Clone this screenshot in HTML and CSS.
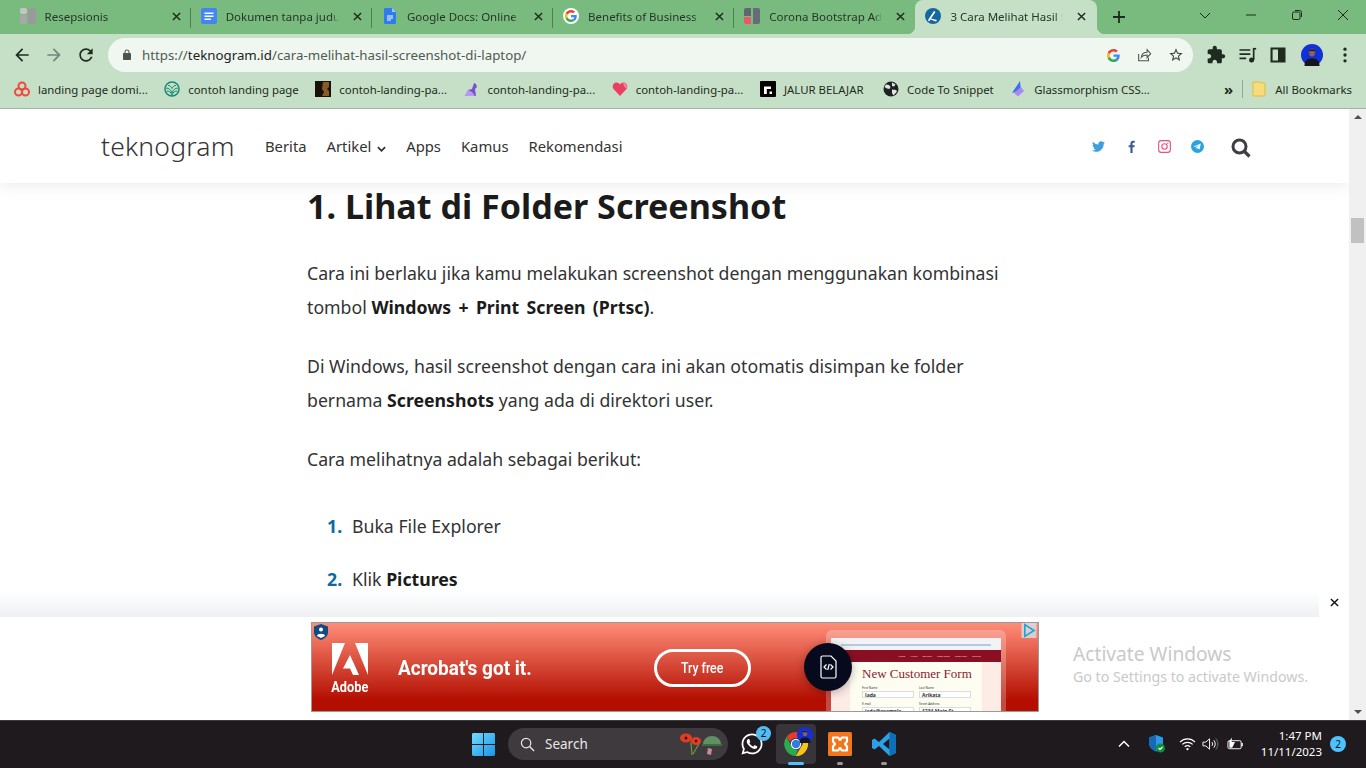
FILE: index.html
```html
<!DOCTYPE html>
<html lang="en">
<head>
    <meta charset="UTF-8">
    <title>3 Cara Melihat Hasil Screenshot di Laptop</title>
    <link rel="stylesheet" href="styles.css">
</head>
<body>

<svg class="sprites" width="0" height="0">
    <symbol id="g-logo" viewBox="0 0 48 48">
        <path fill="#EA4335" d="M24 9.5c3.54 0 6.71 1.22 9.21 3.6l6.85-6.85C35.9 2.38 30.47 0 24 0 14.62 0 6.51 5.38 2.56 13.22l7.98 6.19C12.43 13.72 17.74 9.5 24 9.5z"/>
        <path fill="#4285F4" d="M46.98 24.55c0-1.57-.15-3.09-.38-4.55H24v9.02h12.94c-.58 2.96-2.26 5.48-4.78 7.18l7.73 6c4.51-4.18 7.09-10.36 7.09-17.65z"/>
        <path fill="#FBBC05" d="M10.53 28.59c-.48-1.45-.76-2.99-.76-4.59s.27-3.14.76-4.59l-7.98-6.19C.92 16.46 0 20.12 0 24c0 3.88.92 7.54 2.56 10.78l7.97-6.19z"/>
        <path fill="#34A853" d="M24 48c6.48 0 11.93-2.13 15.89-5.81l-7.73-6c-2.15 1.45-4.92 2.3-8.16 2.3-6.26 0-11.57-4.22-13.47-9.91l-7.98 6.19C6.51 42.62 14.62 48 24 48z"/>
    </symbol>
    <symbol id="x-mark" viewBox="0 0 10 10">
        <path d="M1 1l8 8M9 1l-8 8" stroke="currentColor" stroke-width="1.6" fill="none"/>
    </symbol>
    <symbol id="avatar" viewBox="0 0 22 22">
        <circle cx="11" cy="11" r="11" fill="#1230d8"/>
        <path d="M3.5 22c0-5 2-7.500 7.500-7.500s7.500 2.500 7.500 7.500z" fill="#14161c"/>
        <ellipse cx="11" cy="8.500" rx="3" ry="4" fill="#8a6450"/>
        <path d="M8 7.500c0-3 6-3 6 0-2-1-4-1-6 0z" fill="#15131a"/>
    </symbol>
</svg>

<div class="tabstrip">
    <div class="tab">
        <svg class="favicon" viewBox="0 0 16 16"><rect x="0" y="0" width="7" height="6" rx="2" fill="#c4c4c4"/><rect x="0" y="7" width="7" height="9" rx="2" fill="#a8a8a8"/><rect x="8" y="0" width="8" height="16" rx="2" fill="#9a9a9a"/></svg>
        <span class="tab-title">Resepsionis</span>
        <svg class="tab-close"><use href="#x-mark"/></svg>
    </div>
    <div class="tab">
        <svg class="favicon" viewBox="0 0 16 16"><rect width="16" height="16" rx="2" fill="#4285f4"/><path d="M3.500 4.500h9v1.500h-9zM3.500 7.500h9V9h-9zM3.500 10.500h6.500V12H3.500z" fill="#fff"/></svg>
        <span class="tab-title">Dokumen tanpa judul</span>
        <svg class="tab-close"><use href="#x-mark"/></svg>
    </div>
    <div class="tab">
        <svg class="favicon" viewBox="0 0 16 16"><path d="M3 0h7l4 4v10.500a1.500 1.500 0 0 1-1.500 1.500h-9.500A1.500 1.500 0 0 1 2 14.500V1.500A1.500 1.500 0 0 1 3 0z" fill="#2f7cf0"/><path d="M10 0l4 4h-4z" fill="#a5c6fa"/><path d="M5 7.500h6v1H5zM5 9.500h6v1H5zM5 11.500h4v1H5z" fill="#fff"/></svg>
        <span class="tab-title">Google Docs: Online Document</span>
        <svg class="tab-close"><use href="#x-mark"/></svg>
    </div>
    <div class="tab">
        <svg class="favicon" viewBox="0 0 16 16"><circle cx="8" cy="8" r="8" fill="#fff"/><use href="#g-logo" x="2" y="2" width="12" height="12"/></svg>
        <span class="tab-title">Benefits of Business Analysis</span>
        <svg class="tab-close"><use href="#x-mark"/></svg>
    </div>
    <div class="tab">
        <svg class="favicon" viewBox="0 0 16 16"><path d="M2 0h5v8H0V2a2 2 0 0 1 2-2z" fill="#5f6670"/><path d="M0 9h7v7H2a2 2 0 0 1-2-2z" fill="#f0566a"/><path d="M9 0h5a2 2 0 0 1 2 2v12a2 2 0 0 1-2 2H9z" fill="#666d78"/></svg>
        <span class="tab-title">Corona Bootstrap Admin</span>
        <svg class="tab-close"><use href="#x-mark"/></svg>
    </div>
    <div class="tab tab-active">
        <svg class="favicon" viewBox="0 0 16 16"><circle cx="8" cy="8" r="8" fill="#14689f"/><path d="M3 12L9 3l1.500 1L6 10.500l6 1.500-1 1.500-5.500-2L4 13.500z" fill="#fff"/></svg>
        <span class="tab-title">3 Cara Melihat Hasil Screenshot</span>
        <svg class="tab-close"><use href="#x-mark"/></svg>
    </div>
    <svg class="new-tab" viewBox="0 0 14 14"><path d="M7 1v12M1 7h12" stroke="#1d2a1f" stroke-width="1.800"/></svg>
    <div class="window-controls">
        <svg class="win-btn" viewBox="0 0 12 12"><path d="M1 4l5 5 5-5" stroke="#1d2a1f" fill="none"/></svg>
        <svg class="win-btn" viewBox="0 0 12 12"><path d="M1 6h10" stroke="#1d2a1f"/></svg>
        <svg class="win-btn" viewBox="0 0 12 12"><rect x="1.500" y="3" width="7.500" height="7.500" rx="1.500" stroke="#1d2a1f" fill="none"/><path d="M4 1.500h4.500a2 2 0 0 1 2 2V8" stroke="#1d2a1f" fill="none"/></svg>
        <svg class="win-btn" viewBox="0 0 12 12"><path d="M1 1l10 10M11 1L1 11" stroke="#1d2a1f" fill="none"/></svg>
    </div>
</div>

<div class="toolbar">
    <svg class="tool-icon" viewBox="0 0 24 24"><path fill="#1f2a21" d="M20 11H7.830l5.590-5.590L12 4l-8 8 8 8 1.410-1.410L7.830 13H20v-2z"/></svg>
    <svg class="tool-icon" viewBox="0 0 24 24"><path fill="#72857a" d="M4 11h12.170l-5.590-5.590L12 4l8 8-8 8-1.410-1.410L16.170 13H4v-2z"/></svg>
    <svg class="tool-icon" viewBox="0 0 24 24"><path fill="#1f2a21" d="M17.650 6.350C16.200 4.900 14.210 4 12 4c-4.420 0-7.990 3.580-7.990 8s3.570 8 7.990 8c3.730 0 6.840-2.550 7.730-6h-2.080c-.82 2.330-3.040 4-5.650 4-3.310 0-6-2.690-6-6s2.690-6 6-6c1.660 0 3.140.69 4.220 1.780L13 11h7V4l-2.350 2.350z"/></svg>
    <div class="omnibox">
        <svg class="lock" viewBox="0 0 24 24"><path fill="#4a534c" d="M18 8h-1V6c0-2.760-2.240-5-5-5S7 3.240 7 6v2H6c-1.100 0-2 .9-2 2v10c0 1.100.9 2 2 2h12c1.100 0 2-.9 2-2V10c0-1.100-.9-2-2-2zM9 8V6c0-1.660 1.340-3 3-3s3 1.340 3 3v2z"/></svg>
        <span class="url"><span class="url-dim">https://</span>teknogram.id<span class="url-dim">/cara-melihat-hasil-screenshot-di-laptop/</span></span>
        <svg class="omni-icon omni-g"><use href="#g-logo"/></svg>
        <svg class="omni-icon" viewBox="0 0 18 18"><path d="M3 8v7.500h11V12M6 11.500c.5-3.500 3-5.500 6.500-5.500V3l4 4.500-4 4.500V9c-3 0-5 .8-6.500 2.500z" fill="none" stroke="#4a534c" stroke-width="1.200"/></svg>
        <svg class="omni-icon" viewBox="0 0 24 24"><path fill="#3a433c" d="M22 9.240l-7.190-.62L12 2 9.190 8.630 2 9.240l5.460 4.730L5.820 21 12 17.270 18.180 21l-1.630-7.030L22 9.240zM12 15.400l-3.760 2.270 1-4.280-3.320-2.880 4.380-.38L12 6.100l1.710 4.040 4.380.38-3.320 2.880 1 4.280L12 15.400z"/></svg>
    </div>
    <div class="toolbar-right">
        <svg class="tool-icon" viewBox="0 0 24 24"><path fill="#1f2a21" d="M20.500 11H19V7c0-1.100-.9-2-2-2h-4V3.500C13 2.120 11.880 1 10.500 1S8 2.120 8 3.500V5H4c-1.100 0-1.990.9-1.990 2v3.800H3.500c1.490 0 2.700 1.210 2.700 2.700s-1.210 2.700-2.700 2.700H2V20c0 1.100.9 2 2 2h3.800v-1.500c0-1.490 1.210-2.700 2.700-2.700 1.490 0 2.700 1.210 2.700 2.700V22H17c1.100 0 2-.9 2-2v-4h1.500c1.380 0 2.500-1.120 2.500-2.500S21.880 11 20.500 11z"/></svg>
        <svg class="tool-icon" viewBox="0 0 24 24"><path d="M3 6h13M3 11h13M3 16h8" stroke="#1f2a21" stroke-width="2"/><path d="M20 5v13" stroke="#1f2a21" stroke-width="2"/><path d="M19 4.500h4" stroke="#1f2a21" stroke-width="2"/><circle cx="17.500" cy="18" r="3" fill="#1f2a21"/></svg>
        <svg class="tool-icon" viewBox="0 0 24 24"><path fill="#1f2a21" d="M3 3h18v18H3zm2.500 2.500v13H12v-13z"/></svg>
        <svg class="profile"><use href="#avatar"/></svg>
        <svg class="tool-icon" viewBox="0 0 24 24"><circle cx="12" cy="5" r="2" fill="#1f2a21"/><circle cx="12" cy="12" r="2" fill="#1f2a21"/><circle cx="12" cy="19" r="2" fill="#1f2a21"/></svg>
    </div>
</div>

<div class="bookmarks">
    <div class="bookmark">
        <svg class="favicon" viewBox="0 0 16 16"><g fill="none" stroke="#f0493e" stroke-width="2"><circle cx="8" cy="5" r="3.500"/><circle cx="4.500" cy="11" r="3.500"/><circle cx="11.500" cy="11" r="3.500"/></g></svg>
        <span>landing page domi...</span>
    </div>
    <div class="bookmark">
        <svg class="favicon" viewBox="0 0 16 16"><circle cx="8" cy="8" r="7" fill="none" stroke="#128a78" stroke-width="1.500"/><path d="M2 7c3 0 5 2 6 5 1-3 3-5 6-5M3 10c2 0 4 1 5 4 1-3 3-4 5-4M4 4.500c2 0 3 1 4 3 1-2 2-3 4-3" fill="none" stroke="#128a78"/></svg>
        <span>contoh landing page</span>
    </div>
    <div class="bookmark">
        <svg class="favicon" viewBox="0 0 16 16"><rect width="16" height="16" fill="#17120c"/><path d="M8 1h6v5l-2 2 2 2v5H7l2-4-2-3z" fill="#8a5a2b"/></svg>
        <span>contoh-landing-pa...</span>
    </div>
    <div class="bookmark">
        <svg class="favicon" viewBox="0 0 16 16"><path d="M1 15l3-6 4-1 2-6 2 1 1 3-2 2 1 7z" fill="#7a4fd0"/><path d="M1 15l3-6 4 2 3 4z" fill="#b79af0"/></svg>
        <span>contoh-landing-pa...</span>
    </div>
    <div class="bookmark">
        <svg class="favicon" viewBox="0 0 16 16"><path d="M8 15L1.500 8C-.5 5 1.500 1.500 4.500 1.500c1.500 0 2.800.8 3.500 2 .7-1.200 2-2 3.500-2 3 0 5 3.500 3 6.500z" fill="#ea3f63"/><path d="M11 1.700c2.800-.2 4.800 3 3.200 6L12 5z" fill="#f48aa0"/></svg>
        <span>contoh-landing-pa...</span>
    </div>
    <div class="bookmark bookmark-wide">
        <svg class="favicon" viewBox="0 0 16 16"><rect width="16" height="16" rx="1" fill="#000"/><path d="M4 13V5.500h7V8H6.800v5z" fill="#fff"/><rect x="9.500" y="10.500" width="2.500" height="2.500" fill="#fff"/></svg>
        <span>JALUR BELAJAR</span>
    </div>
    <div class="bookmark">
        <svg class="favicon" viewBox="0 0 16 16"><circle cx="8" cy="8" r="7.500" fill="#202124"/><path d="M3 3.500l3 .5 1.500 2-1 2-2.500-.5L1.500 6zM9 1.500l3.500 2L11 5.500 9 5zM9 8.500l4 .5 1 1.500-3.500 4L9 12z" fill="#dfe8df"/></svg>
        <span>Code To Snippet</span>
    </div>
    <div class="bookmark">
        <svg class="favicon" viewBox="0 0 16 16"><path d="M10 0l1 9-9 3z" fill="#3f6df0"/><path d="M11 6l3 4-6 5.500L4 12z" fill="#a78bf5"/></svg>
        <span>Glassmorphism CSS...</span>
    </div>
    <div class="bookmarks-end">
        <span class="chevrons">»</span>
        <span class="bookmarks-sep"></span>
        <svg class="favicon" viewBox="0 0 16 16"><path d="M2 1h7l1 1h3a1 1 0 0 1 1 1v11a1 1 0 0 1-1 1H3a1 1 0 0 1-1-1z" fill="#f7dc7c" stroke="#e6b93a"/></svg>
        <span>All Bookmarks</span>
    </div>
</div>

<div class="page">
    <div class="viewport">
        <header class="site-header">
            <div class="site-logo">teknogram</div>
            <nav class="site-nav">
                <a>Berita</a>
                <a>Artikel <svg class="caret" viewBox="0 0 10 6"><path d="M1 1l4 4 4-4" fill="none" stroke="#333" stroke-width="2"/></svg></a>
                <a>Apps</a>
                <a>Kamus</a>
                <a>Rekomendasi</a>
            </nav>
            <div class="site-social">
                <svg class="social" viewBox="0 0 512 512"><path fill="#3f9fdc" d="M459.370 151.716c.325 4.548.325 9.097.325 13.645 0 138.720-105.583 298.558-298.558 298.558-59.452 0-114.680-17.219-161.137-47.106 8.447.974 16.568 1.299 25.340 1.299 49.055 0 94.213-16.568 130.274-44.832-46.132-.975-84.792-31.188-98.112-72.772 6.498.974 12.995 1.624 19.818 1.624 9.421 0 18.843-1.300 27.614-3.573-48.081-9.747-84.143-51.980-84.143-102.985v-1.299c13.969 7.797 30.214 12.670 47.431 13.319-28.264-18.843-46.781-51.005-46.781-87.391 0-19.492 5.197-37.360 14.294-52.954 51.655 63.675 129.300 105.258 216.365 109.807-1.624-7.797-2.599-15.918-2.599-24.040 0-57.828 46.782-104.934 104.934-104.934 30.213 0 57.502 12.670 76.670 33.137 23.715-4.548 46.456-13.320 66.599-25.340-7.798 24.366-24.366 44.833-46.132 57.827 21.117-2.273 41.584-8.122 60.426-16.243-14.292 20.791-32.161 39.308-52.628 54.253z"/></svg>
                <svg class="social" viewBox="0 0 12 12"><path fill="#3b5998" d="M7 12V6.800h1.700L9 4.800H7V3.600c0-.6.2-1 1-1h1V.8C8.800.8 8.200.7 7.500.7 6 .7 5 1.600 5 3.300v1.500H3.400v2H5V12z"/></svg>
                <svg class="social" viewBox="0 0 12 12"><rect x=".6" y=".6" width="10.800" height="10.800" rx="2.500" fill="none" stroke="#e4507f" stroke-width="1"/><circle cx="6" cy="6" r="2.500" fill="none" stroke="#e4507f" stroke-width="1"/><circle cx="9" cy="3" r=".6" fill="#e4507f"/></svg>
                <svg class="social" viewBox="0 0 12 12"><circle cx="6" cy="6" r="6" fill="#2ba3e0"/><path d="M2.500 5.900L9 3.300 8 8.800 6.200 7.500 5.200 8.400l-.2-1.600 3-2.700-3.800 2.300z" fill="#fff"/></svg>
                <svg class="site-search" viewBox="0 0 20 20"><circle cx="8.500" cy="8.500" r="6.500" fill="none" stroke="#3d3f45" stroke-width="3"/><path d="M13.500 13.500l5 5" stroke="#3d3f45" stroke-width="3.200"/></svg>
            </div>
        </header>

        <article class="post">
            <h2>1. Lihat di Folder Screenshot</h2>
            <p>Cara ini berlaku jika kamu melakukan screenshot dengan menggunakan kombinasi tombol <b class="spaced">Windows + Print Screen (Prtsc)</b>.</p>
            <p>Di Windows, hasil screenshot dengan cara ini akan otomatis disimpan ke folder bernama <b>Screenshots</b> yang ada di direktori user.</p>
            <p>Cara melihatnya adalah sebagai berikut:</p>
            <ol>
                <li>Buka File Explorer</li>
                <li>Klik <b>Pictures</b></li>
            </ol>
        </article>

        <div class="ad-bar">
            <div class="ad-fade"></div>
            <button class="ad-close"><svg><use href="#x-mark"/></svg></button>
            <div class="ad">
                <svg class="ad-shield" viewBox="0 0 14 16"><path d="M7 0l7 2.500V8c0 4-3 6.500-7 8-4-1.500-7-4-7-8V2.500z" fill="#0f4c81"/><circle cx="7" cy="5.500" r="2" fill="#fff"/><path d="M3 12c0-3 8-3 8 0l-4 2z" fill="#fff"/></svg>
                <svg class="ad-play" viewBox="0 0 18 18"><rect width="18" height="18" fill="#d8e6ee" opacity=".75"/><path d="M4 2l11 7L4 16z" fill="none" stroke="#19a7d8" stroke-width="2"/></svg>
                <div class="adobe">
                    <svg viewBox="0 0 36 40" preserveAspectRatio="none"><path d="M0 0h13L0 40zM23 0h13v40zM18 15l9 25h-6l-3-8h-7z" fill="#fff"/></svg>
                    <span>Adobe</span>
                </div>
                <div class="ad-headline">Acrobat's got it.</div>
                <div class="ad-button"><span>Try free</span></div>
                <div class="ad-mock">
                    <div class="mock-browser">
                        <div class="mock-chrome"><span class="mock-url"></span></div>
                        <div class="mock-menu"><span>Home</span><span>About</span><span>Services</span><span>Meet Team</span><span>Resources</span><span>Contact</span></div>
                        <div class="mock-body">
                            <div class="mock-form">
                                <div class="mock-title">New Customer Form</div>
                                <div class="mock-fields">
                                    <div class="mock-field"><label>First Name</label><div>Jada</div></div>
                                    <div class="mock-field"><label>Last Name</label><div>Arikata</div></div>
                                    <div class="mock-field"><label>E-mail</label><div>jada@example</div></div>
                                    <div class="mock-field"><label>Street Address</label><div>1234 Main St</div></div>
                                </div>
                            </div>
                        </div>
                    </div>
                </div>
                <div class="ad-badge">
                    <svg viewBox="0 0 20 24"><path d="M3 2.500A1.500 1.500 0 0 1 4.500 1H13l5 5v15.500a1.500 1.500 0 0 1-1.500 1.500h-12A1.500 1.500 0 0 1 3 21.500z" fill="none" stroke="#fff" stroke-width="1.200"/><path d="M8.500 9.500L6 12l2.500 2.500M12.500 9.500L15 12l-2.500 2.500M11.300 9l-1.600 6" fill="none" stroke="#fff" stroke-width="1.200"/></svg>
                </div>
            </div>
        </div>

        <div class="activate">
            <div class="activate-title">Activate Windows</div>
            <div class="activate-sub">Go to Settings to activate Windows.</div>
        </div>
    </div>
    <div class="scrollbar">
        <span class="arrow-up"></span>
        <span class="thumb"></span>
        <span class="arrow-down"></span>
    </div>
</div>

<div class="taskbar">
    <svg class="start" viewBox="0 0 24 24"><defs><linearGradient id="win" x1="0" y1="0" x2="1" y2="1"><stop offset="0" stop-color="#6fdcff"/><stop offset="1" stop-color="#1a94e6"/></linearGradient></defs><path fill="url(#win)" d="M0 1.500A1.500 1.500 0 0 1 1.500 0h10v11.500H0zM12.500 0h10A1.500 1.500 0 0 1 24 1.500v10H12.500zM0 12.500h11.500V24h-10A1.500 1.500 0 0 1 0 22.500zM12.500 12.500H24v10a1.500 1.500 0 0 1-1.500 1.500h-10z"/></svg>
    <div class="task-search">
        <svg class="search-glass" viewBox="0 0 16 16"><circle cx="6.500" cy="6.500" r="5" fill="none" stroke="#e6e6e6" stroke-width="1.300"/><path d="M10.200 10.200l4.800 4.800" stroke="#e6e6e6" stroke-width="1.500"/></svg>
        <span class="search-label">Search</span>
        <svg class="search-art" viewBox="0 0 44 26"><path d="M13 11l1 13M22 11l-7 12" stroke="#6c9a3a" stroke-width="1.200" fill="none"/><ellipse cx="8" cy="7" rx="6" ry="4.500" fill="#e23d22"/><ellipse cx="18" cy="10" rx="5" ry="4" fill="#e23d22"/><circle cx="8" cy="7" r="1.500" fill="#3a1410"/><circle cx="18" cy="10" r="1.300" fill="#3a1410"/><path d="M25 13a9 8 0 0 1 18 0z" fill="#5f8f62"/><path d="M24 13h20v2H24z" fill="#3f6a44"/><path d="M30 17l4 1-1 6-4-1z" fill="#c98aa0"/></svg>
    </div>
    <div class="task-app task-whatsapp">
        <svg class="task-icon" viewBox="0 0 448 512"><path fill="#fff" d="M380.900 97.100C339 55.100 283.200 32 223.900 32c-122.400 0-222 99.600-222 222 0 39.100 10.200 77.300 29.600 111L0 480l117.700-30.900c32.400 17.700 68.900 27 106.100 27h.1c122.300 0 224.100-99.600 224.100-222 0-59.300-25.200-115-67.100-157zm-157 341.600c-33.200 0-65.700-8.900-94-25.700l-6.700-4-69.800 18.300L72 359.200l-4.400-7c-18.500-29.400-28.200-63.300-28.200-98.200 0-101.700 82.800-184.500 184.600-184.500 49.300 0 95.600 19.200 130.400 54.100 34.800 34.900 56.200 81.200 56.100 130.500 0 101.800-84.900 184.600-186.600 184.600zm101.200-138.200c-5.500-2.800-32.800-16.200-37.900-18-5.100-1.900-8.800-2.800-12.500 2.800-3.700 5.600-14.300 18-17.600 21.800-3.200 3.700-6.500 4.200-12 1.400-32.600-16.300-54-29.100-75.500-66-5.700-9.800 5.700-9.100 16.300-30.300 1.800-3.700.9-6.900-.5-9.700-1.400-2.800-12.500-30.100-17.100-41.200-4.500-10.800-9.100-9.300-12.500-9.500-3.200-.2-6.900-.2-10.600-.2-3.700 0-9.700 1.400-14.800 6.900-5.100 5.600-19.400 19-19.400 46.300 0 27.300 19.900 53.700 22.600 57.400 2.800 3.700 39.100 59.700 94.800 83.800 35.200 15.200 49 16.500 66.600 13.900 10.700-1.600 32.800-13.400 37.400-26.400 4.600-13 4.600-24.100 3.200-26.400-1.300-2.500-5-3.900-10.500-6.600z"/></svg>
        <span class="app-badge">2</span>
    </div>
    <div class="task-app task-chrome">
        <svg class="task-icon" viewBox="0 0 24 24"><path d="M12 0a12 12 0 0 1 10.400 6H12a6 6 0 0 0-5.700 4.100L2.500 5A12 12 0 0 1 12 0z" fill="#e33b2e"/><path d="M22.400 6a12 12 0 0 1-10.700 18l5.200-9a6 6 0 0 0 0-9z" fill="#f5c518"/><path d="M11.700 24A12 12 0 0 1 2.500 5l4.900 8.800a6 6 0 0 0 6.500 4z" fill="#2da94f"/><circle cx="12" cy="12" r="5.200" fill="#fff"/><circle cx="12" cy="12" r="4.200" fill="#2f7de1"/></svg>
        <svg class="chrome-avatar"><use href="#avatar"/></svg>
        <span class="indicator indicator-on"></span>
    </div>
    <div class="task-app">
        <svg class="task-icon" viewBox="0 0 24 24"><rect width="24" height="24" rx="1.500" fill="#f2761d"/><path d="M5 5.500h5l2 2.500 2-2.500h5v4l-2 2.500 2 2.500v4h-5l-2-2.500-2 2.500H5v-4l2-2.500-2-2.500z" fill="none" stroke="#fff" stroke-width="2.200" stroke-linejoin="round"/></svg>
        <span class="indicator"></span>
    </div>
    <div class="task-app">
        <svg class="task-icon" viewBox="0 0 24 24"><path fill="#2aa0e6" d="M17.500 0L24 3v18l-6.500 3L7 14l-4.500 3.500L0 16V8l2.500-1.500L7 10zM17.500 6.500L11 12l6.500 5.500z"/><path fill="#0e6fb5" d="M17.500 0L24 3v18l-6.500 3z"/></svg>
        <span class="indicator"></span>
    </div>
    <div class="tray">
        <svg class="tray-chevron" viewBox="0 0 12 8"><path d="M1 6.500l5-5 5 5" fill="none" stroke="#fff" stroke-width="1.500"/></svg>
        <svg class="tray-shield" viewBox="0 0 16 18"><path d="M7 0l7 2.500V8c0 4-3 6.500-7 8.500-4-2-7-4.500-7-8.500V2.500z" fill="#2a9bea"/><path d="M7 0v16.500c-4-2-7-4.500-7-8.500V2.500z" fill="#1768b5"/><circle cx="11.500" cy="13" r="4.500" fill="#0f8f35"/><path d="M9.500 13l1.500 1.500 2.500-2.500" fill="none" stroke="#fff" stroke-width="1.200"/></svg>
        <svg class="tray-icon tray-wifi" viewBox="0 0 18 14"><path d="M1 5c4.500-4.500 11.500-4.500 16 0M3.500 7.500c3-3 8-3 11 0M6 10c1.700-1.500 4.300-1.500 6 0" fill="none" stroke="#fff" stroke-width="1.200"/><circle cx="9" cy="12.500" r="1.200" fill="#fff"/></svg>
        <svg class="tray-icon tray-volume" viewBox="0 0 18 14"><path d="M1 5v4h3l4 3.500v-11L4 5z" fill="none" stroke="#fff"/><path d="M10.500 5c1 1.200 1 2.800 0 4M12.500 3c2 2.200 2 5.800 0 8" fill="none" stroke="#fff"/><path d="M14.500 1c3 3.500 3 8.500 0 12" fill="none" stroke="#777"/></svg>
        <svg class="tray-icon tray-battery" viewBox="0 0 18 14"><rect x="1" y="3.500" width="14" height="8.500" rx="1.500" fill="none" stroke="#fff"/><path d="M16 6v3.500" stroke="#fff" stroke-width="1.500"/><path d="M2.500 5h6l-3 6H2.500zM5 0v5H2z" fill="#fff"/></svg>
        <div class="clock">
            <div>1:47 PM</div>
            <div>11/11/2023</div>
        </div>
        <span class="notif-badge">2</span>
    </div>
</div>

</body>
</html>
```

FILE: styles.css
```css
:root {
    --tab-strip: #79bb7e;
    --chrome-bg: #c5e0c6;
    --omni-bg: #f0f7f1;
    --chrome-text: #1f2a21;
    --ui-font: 'Noto Sans', sans-serif;
    --taskbar-bg: #1f1a1d;
}

* {
    box-sizing: border-box;
}

html, body {
    margin: 0;
    height: 768px;
    overflow: hidden;
}

body {
    width: 1366px;
    display: flex;
    flex-direction: column;
    font-family: var(--ui-font);
    color: var(--chrome-text);
    background: #fff;
}

.sprites {
    position: absolute;
}

.favicon {
    width: 16px;
    height: 16px;
    flex: none;
}

/* tab strip */
.tabstrip {
    height: 34px;
    background: var(--tab-strip);
    display: flex;
    align-items: stretch;
    padding-left: 9.500px;
    flex: none;
}

.tab {
    position: relative;
    width: 181.200px;
    height: 34px;
    padding: 0 10px 2px;
    display: flex;
    align-items: center;
    font-size: 11.500px;
    color: #26352a;
    flex: none;
}

.tab::after {
    content: "";
    position: absolute;
    right: 0;
    top: 8px;
    height: 20px;
    width: 1px;
    background: #4d7f52;
}

.tab:nth-child(5)::after {
    display: none;
}

.tab-active {
    background: var(--chrome-bg);
    border-radius: 8px 8px 0 0;
}

/* the flared feet of the active tab */
.tab-active::before,
.tab-active::after {
    content: "";
    position: absolute;
    top: auto;
    bottom: 0;
    width: 8px;
    height: 8px;
}

.tab-active::before {
    left: -8px;
    background: radial-gradient(circle at 0 0, transparent 8px, var(--chrome-bg) 8.500px);
}

.tab-active::after {
    right: -8px;
    background: radial-gradient(circle at 100% 0, transparent 8px, var(--chrome-bg) 8.500px);
}

.tab .favicon {
    margin-right: 9px;
}

.tab-title {
    width: 113px;
    white-space: nowrap;
    overflow: hidden;
    -webkit-mask-image: linear-gradient(to right, #000 93%, transparent 100%);
    mask-image: linear-gradient(to right, #000 93%, transparent 100%);
}

.tab-close {
    width: 9px;
    height: 9px;
    margin-left: 14px;
    color: #1d2a1f;
}

.new-tab {
    width: 14px;
    height: 14px;
    margin: 10px 0 0 15px;
}

.window-controls {
    margin-left: auto;
    display: flex;
    align-items: flex-start;
    gap: 34px;
    padding: 9px 17px 0 0;
}

.win-btn {
    width: 12px;
    height: 12px;
}

/* toolbar */
.toolbar {
    height: 42px;
    background: var(--chrome-bg);
    display: flex;
    align-items: center;
    padding-left: 12px;
    flex: none;
}

.tool-icon {
    width: 20px;
    height: 20px;
    flex: none;
    margin-right: 12px;
}

.omnibox {
    width: 1085px;
    height: 34px;
    border-radius: 17px;
    background: var(--omni-bg);
    display: flex;
    align-items: center;
    padding: 0 9px 0 13px;
}

.lock {
    width: 12px;
    height: 12px;
    margin-right: 9px;
}

.url {
    font-size: 13.300px;
    color: #1d241e;
    flex: 1;
}

.url-dim {
    color: #4f5a52;
}

.omni-icon {
    width: 16px;
    height: 16px;
    margin-left: 16px;
}

.omni-g {
    width: 13px;
    height: 13px;
}

.toolbar-right {
    display: flex;
    align-items: center;
    margin-left: 13px;
    gap: 3px;
}

.toolbar-right .tool-icon {
    margin-right: 8px;
}

.profile {
    width: 22px;
    height: 22px;
    margin: 0 9px 0 2px;
}

/* bookmarks */
.bookmarks {
    height: 33px;
    background: var(--chrome-bg);
    border-bottom: 1px solid #9fb5a1;
    display: flex;
    align-items: center;
    padding: 0 0 6px 14px;
    font-size: 11.400px;
    flex: none;
}

.bookmark {
    display: flex;
    align-items: center;
    gap: 8px;
    margin-right: 16.500px;
    white-space: nowrap;
}

.bookmark-wide {
    margin-right: 19.500px;
}

.bookmarks-end {
    margin-left: auto;
    display: flex;
    align-items: center;
    padding-right: 14px;
}

.chevrons {
    font-size: 15px;
    line-height: 16px;
    font-weight: 700;
}

.bookmarks-sep {
    width: 1px;
    height: 18px;
    background: #91a893;
    margin: 0 8px 0 9px;
}

.bookmarks-end .favicon {
    margin-right: 8px;
}

/* page */
.page {
    height: 611px;
    display: flex;
    flex: none;
}

.viewport {
    position: relative;
    flex: 1;
    overflow: hidden;
}

.scrollbar {
    width: 17px;
    background: #f0f0f0;
    display: flex;
    flex-direction: column;
    align-items: center;
    padding-top: 6px;
}

.arrow-up {
    border: 4px solid transparent;
    border-top: 0;
    border-bottom: 4px solid #505050;
}

.thumb {
    width: 13px;
    height: 25px;
    background: #c1c1c1;
    margin-top: 99px;
}

.arrow-down {
    margin-top: auto;
    margin-bottom: 6px;
    border: 4px solid transparent;
    border-bottom: 0;
    border-top: 4px solid #505050;
}

.site-header {
    height: 74px;
    padding-left: 101px;
    display: flex;
    align-items: center;
    background: #fff;
    box-shadow: 0 4px 14px rgba(0, 0, 0, 0.07);
    position: relative;
}

.site-logo {
    font-size: 26.500px;
    font-weight: 300;
    color: #333;
    letter-spacing: 0.2px;
    width: 164px;
}

.site-nav {
    display: flex;
    gap: 20px;
    font-size: 14.800px;
    color: #333;
}

.caret {
    width: 9px;
    height: 6px;
    margin-left: 2px;
}

.site-social {
    margin-left: auto;
    display: flex;
    align-items: center;
    padding-right: 98px;
}

.social {
    width: 13px;
    height: 13px;
    margin-right: 20px;
}

.site-search {
    width: 20px;
    height: 20px;
    margin: 4px 0 0 7px;
}

.post {
    width: 720px;
    margin-left: 307px;
    color: #333;
}

.post h2 {
    margin: -1px 0 26px;
    font-size: 34.100px;
    line-height: 48px;
    font-weight: 700;
    color: #1b1b1b;
}

.post p {
    margin: 0 0 25px;
    font-size: 17.700px;
    line-height: 34px;
}

.post b {
    color: #1b1b1b;
}

.post b.spaced {
    word-spacing: 2.700px;
}

.post ol {
    margin: 33px 0 0;
    padding: 0;
    list-style: none;
    counter-reset: step;
}

.post li {
    counter-increment: step;
    display: flex;
    font-size: 17.700px;
    line-height: 34px;
    margin-bottom: 19px;
    padding-left: 20px;
    white-space: pre-wrap;
}

.post li::before {
    content: counter(step) ".";
    width: 25px;
    font-weight: 700;
    color: #0b6aa5;
}

/* ad bar */
.ad-bar {
    position: absolute;
    left: 0;
    right: 0;
    bottom: 0;
    height: 103px;
    background: #fff;
    display: flex;
    justify-content: center;
    padding: 5px 0 0 0;
}

.ad-fade {
    position: absolute;
    left: 0;
    right: 0;
    top: -26px;
    height: 26px;
    background: linear-gradient(to bottom, rgba(238, 240, 243, 0), #eef0f3);
}

.ad-close {
    position: absolute;
    right: 0;
    top: -30px;
    width: 30px;
    height: 30px;
    border: 0;
    padding: 0;
    background: #fff;
    border-radius: 8px 0 0 0;
    display: flex;
    align-items: center;
    justify-content: center;
    color: #111;
}

.ad-close svg {
    width: 9px;
    height: 9px;
}

.ad {
    position: relative;
    width: 728px;
    height: 90px;
    margin-left: 1px;
    border: 1px solid #9a9a9a;
    background: linear-gradient(to bottom, #ff8d78, #b30e00 88%);
    display: flex;
    align-items: center;
    color: #fff;
    overflow: hidden;
    padding-left: 20px;
}

.ad-shield {
    position: absolute;
    left: 2px;
    top: 1px;
    width: 14px;
    height: 16px;
}

.ad-play {
    position: absolute;
    right: 0;
    top: 0;
    width: 18px;
    height: 15px;
}

.adobe {
    width: 36px;
    display: flex;
    flex-direction: column;
    align-items: center;
    margin-top: 6px;
}

.adobe svg {
    width: 36px;
    height: 32px;
}

.adobe span {
    font-family: 'Roboto', sans-serif;
    font-weight: 700;
    font-size: 15px;
    line-height: 20px;
    margin-top: 2px;
    transform: scaleX(0.85);
}

.ad-headline {
    font-family: 'Roboto', sans-serif;
    font-size: 21px;
    font-weight: 700;
    margin: 2px 0 0 30px;
    width: 256px;
    white-space: nowrap;
    transform: scaleX(0.905);
    transform-origin: left center;
}

.ad-button {
    width: 97px;
    height: 38px;
    border: 3px solid #fff;
    border-radius: 19px;
    display: flex;
    align-items: center;
    justify-content: center;
    font-family: 'Roboto', sans-serif;
    font-size: 14px;
    font-weight: 500;
    margin-top: 2px;
}

.ad-button span {
    transform: scaleX(0.88);
}

.ad-mock {
    align-self: flex-end;
    width: 180px;
    height: 81px;
    margin-left: 75px;
    padding: 8px 5px 0;
    background: rgba(255, 255, 255, 0.25);
    border-radius: 6px 6px 0 0;
}

.mock-browser {
    height: 100%;
    background: #fdebe6;
}

.mock-chrome {
    height: 12px;
    background: #f2f3f5;
    padding: 6px 10px 0;
}

.mock-url {
    display: block;
    height: 2px;
    background: #b9c8e0;
}

.mock-menu {
    height: 12px;
    background: #8a0f22;
    display: flex;
    justify-content: flex-end;
    align-items: center;
    gap: 5px;
    padding-right: 20px;
    font-size: 2.500px;
    color: #f3d6d6;
}

.mock-body {
    padding-left: 19px;
}

.mock-form {
    width: 132px;
    height: 60px;
    background: #fdfdf2;
    padding: 4px 0 0 12px;
}

.mock-title {
    font-family: 'Liberation Serif', serif;
    font-size: 13px;
    line-height: 16px;
    color: #8a1c30;
    white-space: nowrap;
}

.mock-fields {
    display: grid;
    grid-template-columns: 52px 52px;
    column-gap: 5px;
    margin-top: 4px;
    font-size: 3px;
    color: #333;
}

.mock-field label {
    display: block;
    line-height: 5px;
}

.mock-field div {
    height: 7px;
    font-size: 5px;
    line-height: 6px;
    font-weight: 700;
    background: #fff;
    border: 1px solid #ddd;
    margin-bottom: 4px;
    padding-left: 2px;
    overflow: hidden;
}

.ad-badge {
    position: absolute;
    left: 492px;
    top: 20px;
    width: 48px;
    height: 48px;
    border-radius: 50%;
    background: #070a1c;
    display: flex;
    align-items: center;
    justify-content: center;
    box-shadow: 0 2px 10px rgba(0, 0, 0, 0.3);
}

.ad-badge svg {
    width: 20px;
    height: 24px;
}

.activate {
    position: absolute;
    left: 1073px;
    top: 531px;
    color: #c9c9c9;
    pointer-events: none;
}

.activate-title {
    font-size: 19.200px;
    line-height: 27px;
}

.activate-sub {
    font-size: 14.200px;
    line-height: 20px;
    white-space: nowrap;
}

/* taskbar */
.taskbar {
    height: 48px;
    flex: none;
    background: var(--taskbar-bg);
    display: flex;
    align-items: center;
    padding: 0 0 1px 472px;
    color: #fff;
    border-top: 1px solid #3a3a3c;
}

.start {
    width: 23px;
    height: 23px;
    margin-right: 13px;
}

.task-search {
    width: 220px;
    height: 32px;
    border-radius: 16px;
    background: #3f3a3e;
    display: flex;
    align-items: center;
    padding: 0 6px 0 12px;
    margin-right: 2px;
    position: relative;
}

.search-glass {
    width: 15px;
    height: 15px;
    margin-right: 10px;
}

.search-label {
    font-size: 13.500px;
    color: #e8e8e8;
}

.search-art {
    width: 44px;
    height: 26px;
    margin-left: auto;
}

.task-app {
    position: relative;
    width: 44px;
    height: 40px;
    display: flex;
    align-items: center;
    justify-content: center;
}

.task-chrome {
    background: #37343a;
    border-radius: 4px;
    width: 40px;
    margin: 0 2px;
}

.task-icon {
    width: 24px;
    height: 24px;
}

.app-badge {
    position: absolute;
    right: 3px;
    top: 2px;
    width: 15px;
    height: 15px;
    border-radius: 50%;
    background: #52bdf5;
    color: #111;
    font-size: 10px;
    line-height: 15px;
    text-align: center;
}

.chrome-avatar {
    position: absolute;
    right: 3px;
    top: 3px;
    width: 16px;
    height: 16px;
}

.indicator {
    position: absolute;
    left: 50%;
    bottom: -1px;
    width: 6px;
    height: 3px;
    margin-left: -3px;
    border-radius: 2px;
    background: #9a9a9a;
}

.indicator-on {
    width: 16px;
    margin-left: -8px;
    background: #4cc2ff;
}

.tray {
    margin-left: auto;
    display: flex;
    align-items: center;
    padding-right: 20px;
}

.tray-chevron {
    width: 12px;
    height: 8px;
    margin-right: 19px;
}

.tray-shield {
    width: 16px;
    height: 18px;
    margin-right: 14px;
}

.tray-icon {
    width: 17px;
    height: 14px;
    margin-right: 6px;
}

.tray-battery {
    margin: 0 8px 0 2px;
}

.clock {
    width: 70px;
    text-align: right;
    font-size: 11.500px;
    line-height: 16px;
    margin-right: 8px;
}

.notif-badge {
    width: 16px;
    height: 16px;
    border-radius: 50%;
    background: #4cc2ff;
    color: #111;
    font-size: 10px;
    line-height: 16px;
    text-align: center;
}
```
